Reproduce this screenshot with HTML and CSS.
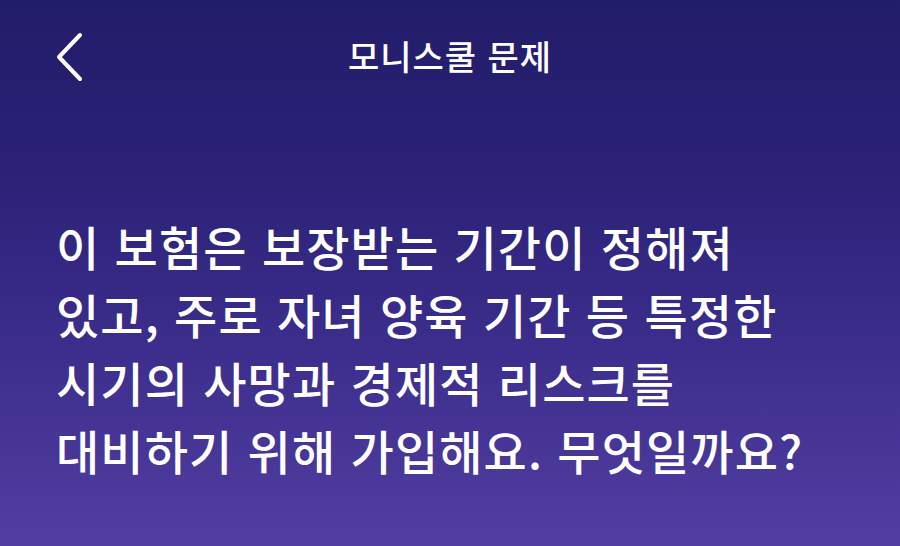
FILE: index.html
```html
<!DOCTYPE html>
<html lang="ko">
<head>
<meta charset="utf-8">
<title>모니스쿨 문제</title>
<link rel="stylesheet" href="styles.css">
</head>
<body>
<div class="screen">
  <header class="topbar">
    <button class="back" aria-label="뒤로">
      <svg width="30" height="52" viewBox="0 0 30 52"><path d="M26 4 L5 26 L26 48" fill="none" stroke="#fff" stroke-width="4" stroke-linecap="round" stroke-linejoin="round"/></svg>
    </button>
    <h1 class="title">모니스쿨 문제</h1>
    <span class="spacer"></span>
  </header>
  <main class="content">
    <p class="question">이 보험은 보장받는 기간이 정해져<br>있고, 주로 자녀 양육 기간 등 특정한<br>시기의 사망과 경제적 리스크를<br>대비하기 위해 가입해요. 무엇일까요?</p>
  </main>
</div>
</body>
</html>
```

FILE: styles.css
```css
html, body {
  margin: 0;
  padding: 0;
}
body {
  font-family: "Noto Sans CJK KR", "Noto Sans", sans-serif;
  color: #fff;
}
.screen {
  width: 900px;
  height: 546px;
  overflow: hidden;
  background: linear-gradient(180deg, #221d6a 0%, #2a2176 30%, #3d2e8d 65%, #523ea1 100%);
  display: flex;
  flex-direction: column;
}
.topbar {
  display: flex;
  align-items: center;
  justify-content: space-between;
  height: 110px;
  padding: 0 52px 0 54px;
  box-sizing: border-box;
}
.back {
  background: none;
  border: 0;
  padding: 0;
  width: 60px;
  display: flex;
  align-items: center;
  margin-top: 4px;
}
.spacer {
  width: 60px;
}
.title {
  margin: 0 0 0 -2px;
  font-size: 34px;
  font-weight: 500;
  letter-spacing: 1px;
}
.content {
  padding: 102px 0 0 56px;
}
.question {
  margin: 0;
  font-size: 47px;
  font-weight: 500;
  line-height: 68px;
  letter-spacing: 1.1px;
}
```
